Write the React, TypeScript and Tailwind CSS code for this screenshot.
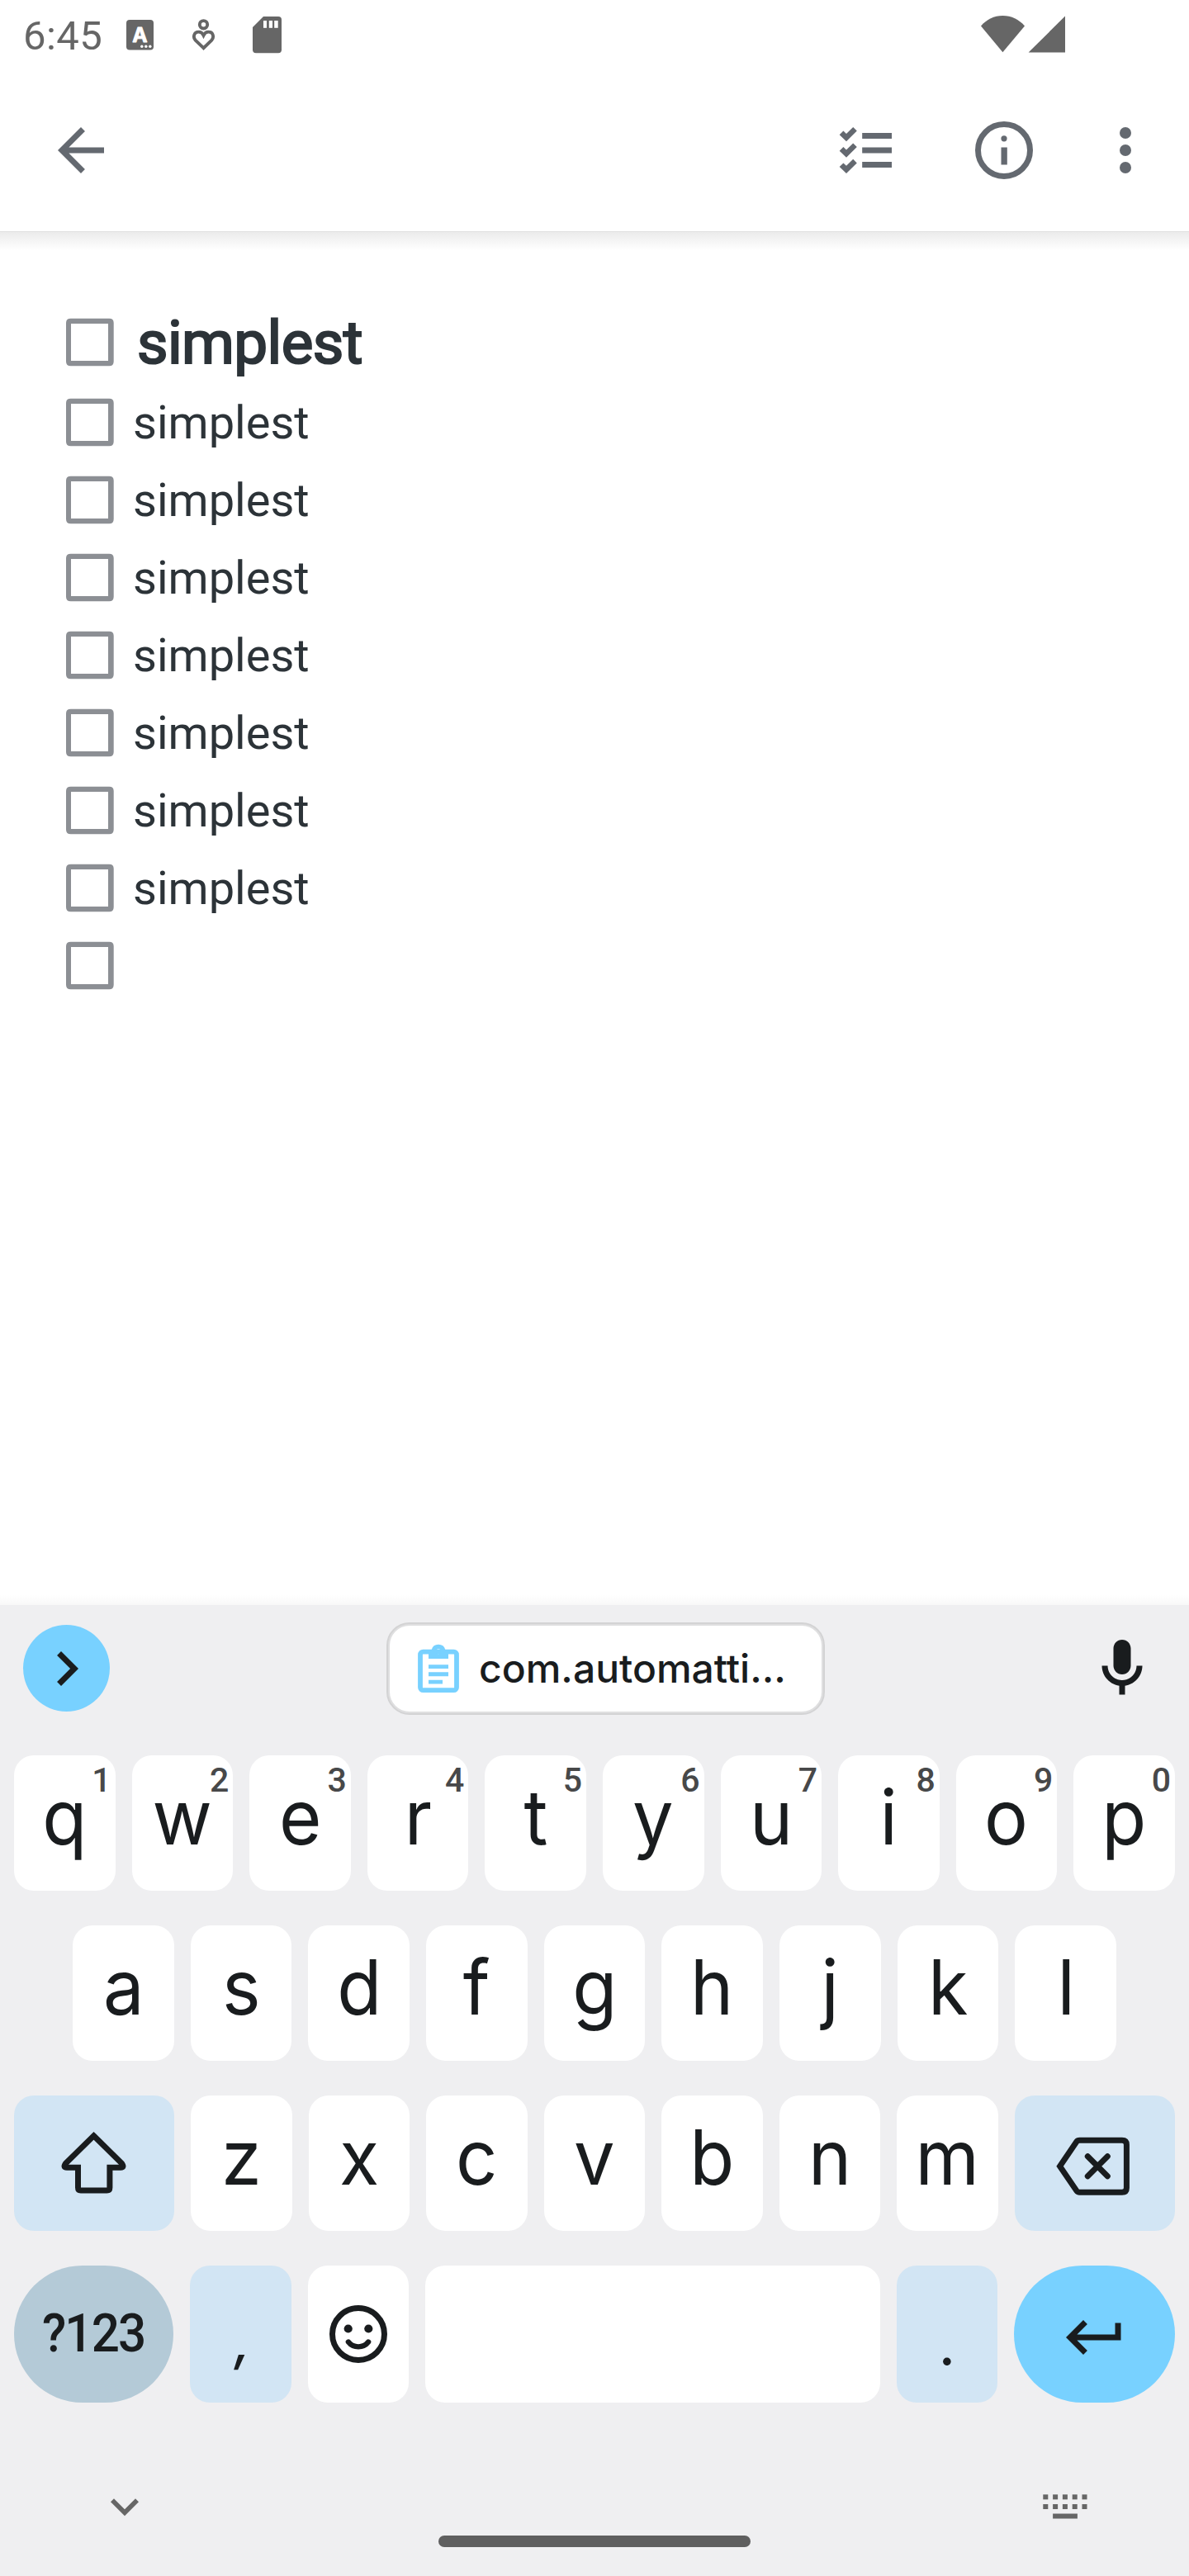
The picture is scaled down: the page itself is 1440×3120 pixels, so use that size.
import type { ReactNode } from "react";

const ARROW_BACK = "M20 11H7.83l5.59-5.59L12 4l-8 8 8 8 1.41-1.41L7.83 13H20v-2z";
const CHEVRON_RIGHT = "M10 6L8.59 7.41 13.17 12l-4.58 4.59L10 18l6-6z";
const EXPAND_MORE = "M16.59 8.59L12 13.17 7.41 8.59 6 10l6 6 6-6z";
const KEYBOARD_RETURN = "M19 7v4H5.83l3.58-3.59L8 6l-6 6 6 6 1.41-1.41L5.83 13H21V7z";
const MIC =
  "M12 14c1.66 0 3-1.34 3-3V5c0-1.66-1.34-3-3-3S9 3.34 9 5v6c0 1.66 1.34 3 3 3z M17 11c0 2.76-2.24 5-5 5s-5-2.24-5-5H5c0 3.53 2.61 6.43 6 6.92V21h2v-3.08c3.39-.49 6-3.39 6-6.92h-2z";

function Icon({ d, className }: { d: string; className: string }) {
  return (
    <svg viewBox="0 0 24 24" className={className} fill="currentColor">
      <path d={d} />
    </svg>
  );
}

function StatusBar() {
  return (
    <div className="flex h-[84px] items-start text-[#666666]">
      <span className="ml-[28px] w-[120px] font-['Roboto',sans-serif] text-[49px] leading-[87px] tracking-[0.4px]">6:45</span>
      <svg className="h-[84px] w-[210px]" viewBox="148 0 210 84" fill="currentColor">
        <rect x="153" y="24" width="33" height="36.6" rx="4" />
        <text x="169.4" y="51" textAnchor="middle" fontFamily="Inter, sans-serif" fontWeight="700" fontSize="24.5" fill="#fff" stroke="#fff" strokeWidth="0.8" strokeLinejoin="round">A</text>
        <g fill="#fff">
          <circle cx="171.8" cy="56.3" r="1.7" />
          <circle cx="176.8" cy="56.3" r="1.7" />
          <circle cx="181.8" cy="56.3" r="1.7" />
        </g>
        <g fill="none" stroke="currentColor" strokeWidth="3.9">
          <circle cx="246.5" cy="29.8" r="4.7" />
          <path d="M246.5 58.2L236.6 48.6C233.4 45 234.8 38.6 240.6 38.6C243.4 38.6 245.3 40.3 246.5 42.8C247.7 40.3 249.6 38.6 252.4 38.6C258.2 38.6 259.6 45 256.4 48.6Z" />
        </g>
        <path d="M319 20H337Q341 20 341 24V60.3Q341 64.3 337 64.3H310Q306 64.3 306 60.3V33Z" />
        <g fill="#fff">
          <rect x="319" y="25" width="4" height="8.8" />
          <rect x="325.8" y="25" width="4.2" height="8.8" />
          <rect x="332.2" y="25" width="4.5" height="8.8" />
        </g>
      </svg>
      <svg className="ml-auto mr-[144px] h-[84px] w-[112px]" viewBox="1184 0 112 84" fill="currentColor">
        <path d="M1188 31.4C1195 23.5 1204 19 1214.4 19C1224.8 19 1234 23.5 1241 31.4L1214.4 63.2Z" />
        <path d="M1290 19.5V63.6H1245.6Z" />
      </svg>
    </div>
  );
}

function Toolbar() {
  return (
    <div className="flex h-[196px] items-start pt-[56px] text-[#646970]">
      <Icon d={ARROW_BACK} className="ml-[56px] size-[84px]" />
      <svg className="ml-auto size-[84px]" viewBox="0 0 84 84" fill="currentColor">
        {[0, 19.5, 38.8].map((dy) => (
          <path key={dy} transform={`translate(0 ${dy})`} d="M10.7 23.3L15.4 18.6L19 22L27.2 14L31.8 18.6L19 31.2Z" />
        ))}
        <rect x="38.2" y="21" width="35.8" height="7" />
        <rect x="38.2" y="38.5" width="35.8" height="7" />
        <rect x="38.2" y="56" width="35.8" height="7" />
      </svg>
      <svg className="ml-[84px] size-[84px]" viewBox="0 0 84 84" fill="currentColor">
        <circle cx="42" cy="42" r="31.5" fill="none" stroke="currentColor" strokeWidth="7" />
        <circle cx="42" cy="27.8" r="3.6" />
        <rect x="38.5" y="38.5" width="7.3" height="21" />
      </svg>
      <svg className="ml-[63px] mr-[35px] size-[84px]" viewBox="0 0 24 24" fill="currentColor">
        <circle cx="12" cy="6" r="2" />
        <circle cx="12" cy="12" r="2" />
        <circle cx="12" cy="18" r="2" />
      </svg>
    </div>
  );
}

function Checkbox() {
  return (
    <svg className="size-[60px] shrink-0" viewBox="0 0 60 60">
      <path
        d="M5.7 0.7H52.3Q57.7 0.7 57.7 6.1V52.7Q57.7 58.3 52.3 58.3H5.7Q0 58.3 0 52.7V6.1Q0 0.7 5.7 0.7ZM6 7V52H51V7Z"
        fill="#8c8f94"
        fillRule="evenodd"
      />
    </svg>
  );
}

function ChecklistItem({ text }: { text: string }) {
  return (
    <li className="flex h-[94px] items-start">
      <Checkbox />
      <span className="ml-[21px] text-[56px] leading-[61px]">{text}</span>
    </li>
  );
}

function Key({
  children,
  hint,
  tone = "bg-white",
  size = "flex-1",
}: {
  children?: ReactNode;
  hint?: string;
  tone?: string;
  size?: string;
}) {
  return (
    <div className={`relative flex items-start justify-center ${size} ${tone}`}>
      {children}
      {hint && (
        <span className="absolute right-[5px] top-[5px] font-['Roboto',sans-serif] text-[41px] font-medium leading-[50px] text-[#474849]">{hint}</span>
      )}
    </div>
  );
}

function Letter({ children }: { children: string }) {
  return <span className="scale-x-[0.96] text-[92px] leading-[149px]">{children}</span>;
}

const ROUND = "flex-1 rounded-[24px]";
const WIDE = "w-[194px] rounded-[24px]";
const ITEMS = ["simplest", "simplest", "simplest", "simplest", "simplest", "simplest", "simplest", ""];

function SuggestionStrip() {
  return (
    <div className="flex h-[182px] items-start">
      <div className="ml-[28px] mt-[24px] flex size-[105px] items-center justify-center rounded-full bg-[#78d1ff]">
        <Icon d={CHEVRON_RIGHT} className="size-[84px]" />
      </div>
      <div className="ml-[335px] mt-[21px] flex h-[112px] w-[531px] items-start rounded-[28px] border-2 border-[#d3d3d4] bg-[#dfdfe0] p-[2px]">
        <div className="flex h-[104px] w-[523px] rounded-[24px] bg-white">
          <svg className="ml-[30px] mt-[18px] h-[66px] w-[58px]" viewBox="502 1987 58 66">
            <rect x="509" y="2000.6" width="44" height="46.6" rx="3.5" fill="none" stroke="#78d1ff" strokeWidth="5.8" />
            <path
              d="M519 1998H522.7A8.6 8.6 0 0 1 539.3 1998H543V2009H519ZM531 1997.2A3 3 0 1 0 531 2003.2A3 3 0 1 0 531 1997.2Z"
              fill="#78d1ff"
              fillRule="evenodd"
            />
            <path d="M519 2016.2h24v4.9h-24zM519 2025.3h24v4.9h-24zM519 2034.7h17v4.9h-17z" fill="#78d1ff" />
          </svg>
          <span className="ml-[20px] text-[48px] font-medium leading-[103px]">com.automatti...</span>
        </div>
      </div>
      <Icon d={MIC} className="ml-auto mr-[39px] mt-[35px] size-[84px]" />
    </div>
  );
}

function Keyboard() {
  return (
    <div className="flex h-[1176px] flex-col bg-[#efeff1] font-['Inter',sans-serif] text-[#191c1e]">
      <SuggestionStrip />
      <div className="flex h-[164px] gap-[20px] px-[17px]">
        {"qwertyuiop".split("").map((c, i) => (
          <Key key={c} size={ROUND} hint={String((i + 1) % 10)}>
            <Letter>{c}</Letter>
          </Key>
        ))}
      </div>
      <div className="mt-[42px] flex h-[164px] gap-[20px] px-[88px]">
        {"asdfghjkl".split("").map((c) => (
          <Key key={c} size={ROUND}>
            <Letter>{c}</Letter>
          </Key>
        ))}
      </div>
      <div className="mt-[42px] flex h-[164px] gap-[20px] px-[17px]">
        <Key tone="bg-[#d2e5f4]" size={WIDE}>
          <svg className="mt-[38px] h-[90px] w-[90px]" viewBox="68.5 2576 90 90" fill="none" stroke="currentColor" strokeWidth="7">
            <path d="M113 2586.8L147 2620.2Q150.6 2625.2 145.5 2625.2H132.4V2649.5Q132.4 2653 129 2653H97.3Q94 2653 94 2649.5V2625.2H80.5Q75.4 2625.2 79 2620.2Z" />
          </svg>
        </Key>
        {"zxcvbnm".split("").map((c) => (
          <Key key={c} size={ROUND}>
            <Letter>{c}</Letter>
          </Key>
        ))}
        <Key tone="bg-[#d2e5f4]" size={WIDE}>
          <svg className="mt-[42px] h-[88px] w-[100px]" viewBox="1276 2580 100 88" fill="none" stroke="currentColor" strokeWidth="7">
            <path d="M1283.6 2623.7L1303.8 2594Q1305 2592.2 1307.5 2592.2H1359Q1364.4 2592.2 1364.4 2597.5V2650Q1364.4 2655.2 1359 2655.2H1307.5Q1305 2655.2 1303.8 2653.4Z" />
            <path d="M1317.3 2611.8L1341.3 2635.8M1341.3 2611.8L1317.3 2635.8" strokeLinecap="round" />
          </svg>
        </Key>
      </div>
      <div className="mt-[42px] flex h-[166px] gap-[20px] px-[17px]">
        <Key tone="bg-[#b4cad7]" size="w-[193px] rounded-full">
          <span className="scale-x-[0.94] font-['Roboto',sans-serif] text-[64px] font-medium leading-[166px] tracking-[-2px]">?123</span>
        </Key>
        <Key tone="bg-[#d2e5f4]" size="w-[122.5px] rounded-[24px]">
          <span className="ml-[5px] text-[64px] font-medium italic leading-[184px]">,</span>
        </Key>
        <Key size="w-[122.5px] rounded-[24px]">
          <svg className="mt-[43px] size-[80px]" viewBox="0 0 80 80" fill="none" stroke="currentColor">
            <circle cx="40" cy="40" r="31.5" strokeWidth="7" />
            <circle cx="27.7" cy="33.5" r="5.1" fill="currentColor" stroke="none" />
            <circle cx="52.3" cy="33.5" r="5.1" fill="currentColor" stroke="none" />
            <path d="M27.9 49.6Q32.5 55.4 40 55.4Q47.5 55.4 52.1 49.6" strokeWidth="6.4" strokeLinecap="round" />
          </svg>
        </Key>
        <Key size={ROUND} />
        <Key tone="bg-[#d2e5f4]" size="w-[122.5px] rounded-[24px]">
          <span className="text-[72px] leading-[190px]">.</span>
        </Key>
        <Key tone="bg-[#78d1ff]" size="w-[195px] rounded-full">
          <Icon d={KEYBOARD_RETURN} className="mt-[44.5px] size-[84px]" />
        </Key>
      </div>
      <div className="mt-[92px] flex h-[68px] items-start justify-between pl-[117px] pr-[116px] text-[#666666]">
        <Icon d={EXPAND_MORE} className="size-[68px]" />
        <svg className="h-[68px] w-[68px]" viewBox="1256 3002 68 68" fill="currentColor">
          {[0, 1, 2, 3, 4].map((i) => (
            <g key={i}>
              <rect x={1263.3 + i * 11.8} y="3021.3" width="6" height="6" />
              <rect x={1263.3 + i * 11.8} y="3033" width="6" height="6" />
            </g>
          ))}
          <rect x="1275.1" y="3044.5" width="29.8" height="6" />
        </svg>
      </div>
      <div className="mx-auto mt-px h-[14px] w-[378px] rounded-full bg-[#5f5f5f]" />
    </div>
  );
}

export default function App() {
  return (
    <div className="flex h-[3120px] w-[1440px] flex-col overflow-hidden bg-white">
      <StatusBar />
      <Toolbar />
      <div className="h-px bg-[#e1e1e1]" />
      <div className="h-[22px] bg-linear-to-b from-[#ebebeb] to-white" />
      <main className="flex-1 font-['Roboto',sans-serif] text-[#2c3338]">
        <ul className="ml-[80px] mt-[82px]">
          <li className="flex h-[97px] items-start">
            <Checkbox />
            <span className="ml-[26px] text-[72.8px] leading-[60px] tracking-[-0.6px] [-webkit-text-stroke:2.2px_#2c3338]">simplest</span>
          </li>
          {ITEMS.map((text, i) => (
            <ChecklistItem key={i} text={text} />
          ))}
        </ul>
      </main>
      <div className="h-[12px] bg-linear-to-b from-white to-[#f8f8f8]" />
      <Keyboard />
    </div>
  );
}
